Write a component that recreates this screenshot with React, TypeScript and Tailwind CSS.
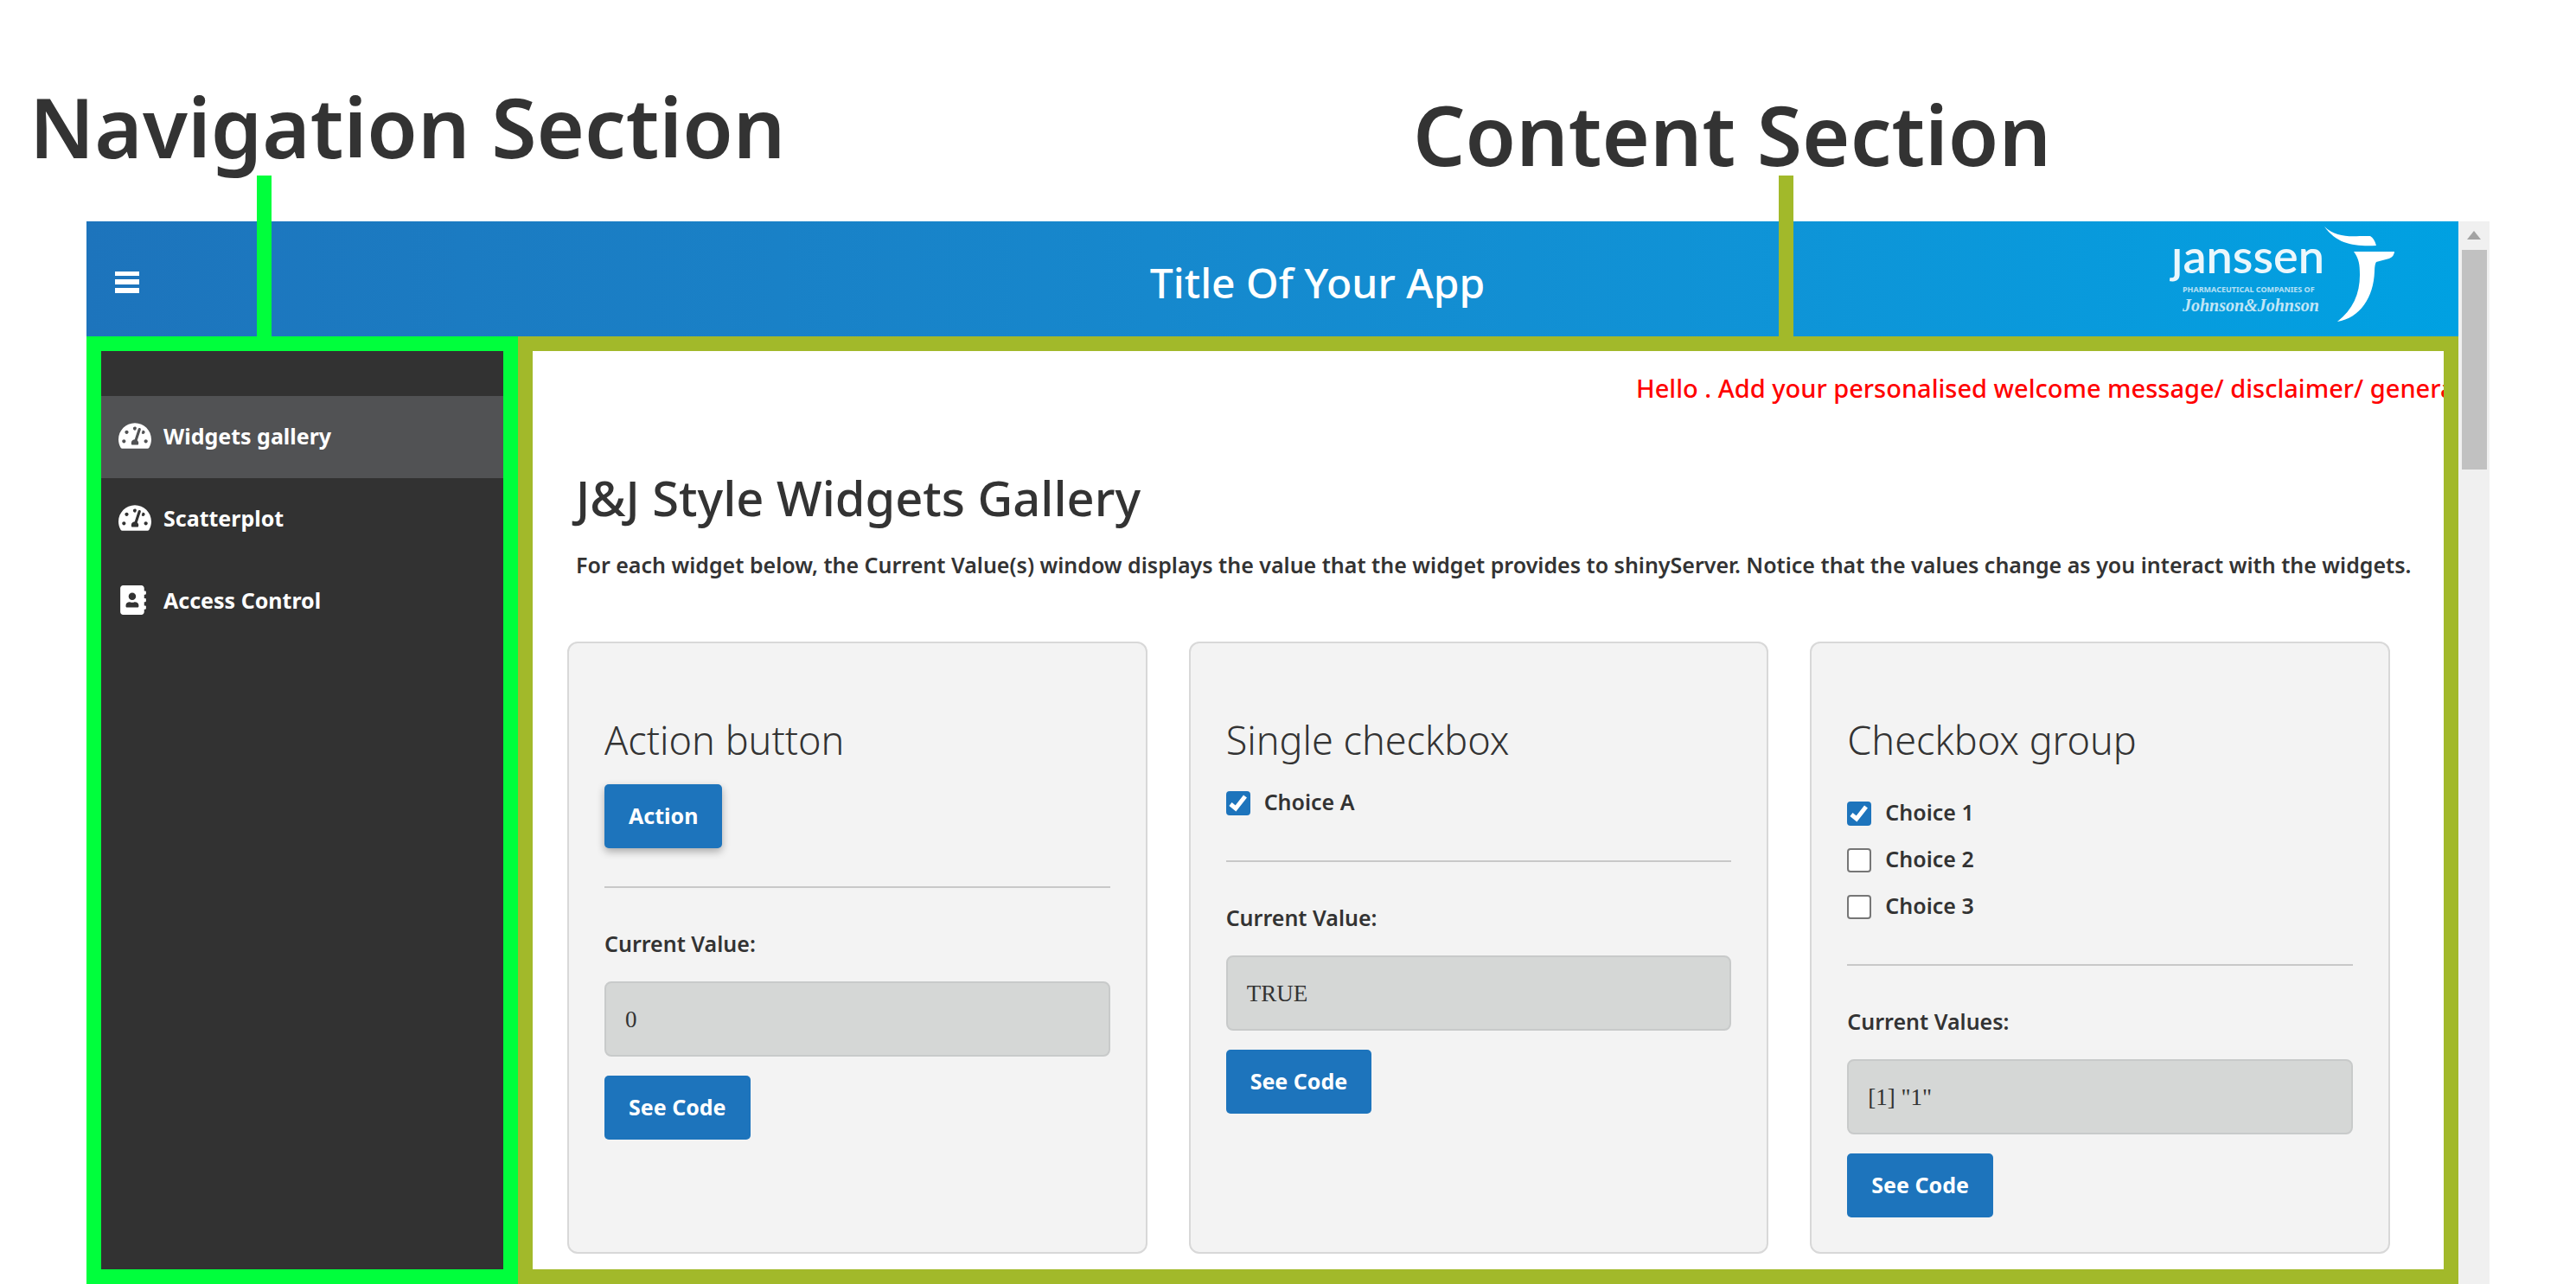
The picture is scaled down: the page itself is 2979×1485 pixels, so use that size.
import { useState } from "react";
import type { ReactNode } from "react";
import { FaAddressBook, FaTachometerAlt } from "react-icons/fa";

function JanssenLogo() {
  return (
    <svg viewBox="0 0 270 133" className="h-[133px] w-[270px]" fill="#fff" role="img" aria-label="Janssen">
      <text x="10" y="60" fontFamily="Lato" fontSize="54" opacity="0.92">
        ȷanssen
      </text>
      <text x="23" y="82" fontFamily="'Noto Sans'" fontWeight="700" fontSize="9" opacity="0.7">
        PHARMACEUTICAL COMPANIES OF
      </text>
      <text x="23" y="104" fontFamily="'Liberation Serif'" fontStyle="italic" fontWeight="700" fontSize="20" opacity="0.75">
        Johnson&amp;Johnson
      </text>
      <path d="M187 6 C198 17 214 18 228 17 L240 17 Q245 20 247 28 C222 29 202 27 187 6 Z" />
      <path d="M221 35 H268 Q268 40 262 43 L247 47 Q245 50 245 58 C244 88 228 112 202 116 C220 102 228 84 228 62 C228 50 227 43 221 35 Z" />
    </svg>
  );
}

function NavItem({ icon, label, active }: { icon: ReactNode; label: string; active?: boolean }) {
  return (
    <li className={active ? "bg-[#515254]" : ""}>
      <a href="#" className="flex h-[95px] items-center gap-3.5 pb-1 pl-5 font-bold text-white">
        <span className="w-[38px]">{icon}</span>
        {label}
      </a>
    </li>
  );
}

function Checkbox({ label, initial = false }: { label: string; initial?: boolean }) {
  const [on, setOn] = useState(initial);
  return (
    <label className="flex h-11 items-center gap-4 pb-1">
      <span className="mt-1 grid size-7">
        <input
          type="checkbox"
          checked={on}
          onChange={() => setOn(!on)}
          className="col-start-1 row-start-1 size-7 appearance-none rounded border-2 border-[#767676] bg-white checked:border-[#1d74bc] checked:bg-[#1d74bc]"
        />
        {on && (
          <svg viewBox="0 0 28 28" className="pointer-events-none col-start-1 row-start-1 size-7" fill="none" stroke="#fff" strokeWidth="5">
            <path d="M5 15 L11 20 L22 6" />
          </svg>
        )}
      </span>
      {label}
    </label>
  );
}

function Button({ children, raised }: { children: ReactNode; raised?: boolean }) {
  return (
    <button
      className={
        raised
          ? "block h-[74px] rounded-[5px] bg-[#1d74bc] px-7 pb-0.5 font-bold text-white shadow-[0_4px_10px_rgba(0,0,0,0.3)]"
          : "block h-[74px] rounded-[5px] bg-[#1d74bc] px-7 pb-0.5 font-bold text-white"
      }
    >
      {children}
    </button>
  );
}

function Card({ title, valueLabel, value, children }: { title: string; valueLabel: string; value: string; children: ReactNode }) {
  return (
    <section className="rounded-xl border-2 border-[#d8d8d8] bg-[#f3f3f3] px-[41px] pt-[87px] pb-10">
      <h3 className="text-[45px] leading-[50px] font-light">{title}</h3>
      <div className="mt-[26px]">{children}</div>
      <hr className="mt-11 border-t-2 border-[#c8c8c8]" />
      <p className="mt-11">{valueLabel}</p>
      <output className="mt-6 flex h-[87px] items-center rounded-lg border-2 border-[#c8caca] bg-[#d5d7d6] px-[22px] font-['Liberation_Serif',serif] text-[27px] font-normal">
        {value}
      </output>
      <div className="mt-[22px]">
        <Button>See Code</Button>
      </div>
    </section>
  );
}

export default function App() {
  return (
    <div className="relative flex min-h-screen flex-col bg-white font-['Noto_Sans',sans-serif] text-[25px] leading-[40px] font-semibold text-[#333]">
      <div className="grid h-[256px] grid-cols-[1634px_1fr] text-[95px] leading-[120px]">
        <div className="pt-[86px] pl-[34px]">Navigation Section</div>
        <div className="pt-[95px]">Content Section</div>
      </div>
      <div className="absolute top-[203px] left-[297px] h-[187px] w-[17px] bg-[#00ff3c]" />
      <div className="absolute top-[203px] left-[2057px] h-[187px] w-[17px] bg-[#a2b92a]" />

      <div className="mx-[100px] flex flex-1">
        <div className="flex min-w-0 flex-1 flex-col">
          <header className="grid h-[133px] grid-cols-[1fr_auto_1fr] items-center bg-linear-to-r from-[#1d74bc] to-[#00a1e2] text-white">
            <button aria-label="Toggle navigation" className="ml-[33px] justify-self-start pt-2">
              <svg viewBox="0 0 28 26" className="h-[26px] w-7" fill="currentColor">
                <path d="M0 0 H28 V5 H0 Z M0 9 H28 V15 H0 Z M0 19 H28 V25 H0 Z" />
              </svg>
            </button>
            <h1 className="pt-2 pl-[104px] text-[48px] leading-[60px] font-medium">Title Of Your App</h1>
            <div className="mr-[72px] justify-self-end">
              <JanssenLogo />
            </div>
          </header>
          <div className="flex flex-1">
            <nav className="w-[499px] border-[17px] border-[#00ff3c] bg-[#323232] pt-[52px]">
              <ul>
                <NavItem active icon={<FaTachometerAlt size={38} />} label="Widgets gallery" />
                <NavItem icon={<FaTachometerAlt size={38} />} label="Scatterplot" />
                <NavItem icon={<FaAddressBook size={34} />} label="Access Control" />
              </ul>
            </nav>
            <main className="min-w-0 flex-1 border-[17px] border-[#a2b92a] pt-[23px] pb-[18px]">
              <p className="ml-auto w-[934px] overflow-hidden text-[29px] font-medium whitespace-nowrap text-[#ff0000]">
                Hello . Add your personalised welcome message/ disclaimer/ general
              </p>
              <h2 className="mt-[76px] ml-[50px] text-[56px] leading-[60px] font-medium">J&amp;J Style Widgets Gallery</h2>
              <p className="mt-7 ml-[50px] whitespace-nowrap">
                For each widget below, the Current Value(s) window displays the value that the widget provides to shinyServer. Notice that the values change as you interact with the widgets.
              </p>
              <div className="mt-[69px] mr-[62px] ml-10 grid grid-cols-3 gap-12">
                <Card title="Action button" valueLabel="Current Value:" value="0">
                  <Button raised>Action</Button>
                </Card>
                <Card title="Single checkbox" valueLabel="Current Value:" value="TRUE">
                  <Checkbox label="Choice A" initial />
                </Card>
                <Card title="Checkbox group" valueLabel="Current Values:" value={'[1] "1"'}>
                  <div className="flex flex-col gap-2.5 pt-3">
                    <Checkbox label="Choice 1" initial />
                    <Checkbox label="Choice 2" />
                    <Checkbox label="Choice 3" />
                  </div>
                </Card>
              </div>
            </main>
          </div>
        </div>
        <div className="flex w-9 flex-col items-center bg-[#f0f0f0] pt-[11px]">
          <svg viewBox="0 0 16 10" className="h-2.5 w-4" fill="#a3a3a3">
            <path d="M0 10 L8 0 L16 10 Z" />
          </svg>
          <div className="mt-3 h-[254px] w-[29px] bg-[#c1c1c1]" />
        </div>
      </div>
    </div>
  );
}
